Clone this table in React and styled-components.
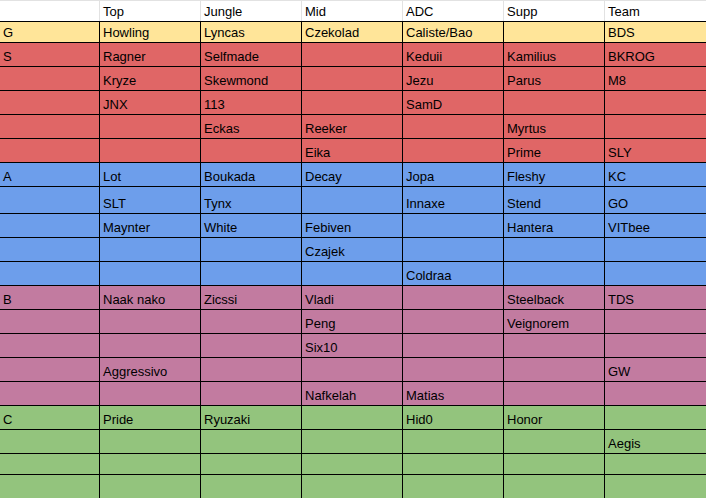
import React from "react";
import styled, { createGlobalStyle } from "styled-components";

const Global = createGlobalStyle`
  html, body { margin: 0; padding: 0; background: #ffffff; overflow: hidden; }
  body { font-family: "Liberation Sans", Arial, sans-serif; }
`;

const COLORS = {
  yellow: "#ffe599",
  red: "#e06666",
  blue: "#6d9eeb",
  pink: "#c27ba0",
  green: "#93c47d",
};

const Sheet = styled.div`
  width: 706px;
  display: flex;
  flex-direction: column;
`;

const Row = styled.div`
  display: grid;
  grid-template-columns: 99px 100px 100px 100px 100px 100px 101px;
  column-gap: 1px;
  background: ${(p) => (p.$header ? "#e2e2e2" : "#000000")};
  border-top: 1px solid ${(p) => (p.$header ? "#e2e2e2" : "#000000")};
  height: ${(p) => p.$h}px;
  box-sizing: content-box;
`;

const Cell = styled.div`
  background: ${(p) => p.$bg};
  display: flex;
  align-items: flex-end;
  padding: 0 3px 2px 3px;
  font-size: 13px;
  line-height: 15px;
  color: #000000;
  white-space: nowrap;
  overflow: hidden;
`;

const header = ["", "Top", "Jungle", "Mid", "ADC", "Supp", "Team"];

const rows = [
  { c: "yellow", h: 20, d: ["G", "Howling", "Lyncas", "Czekolad", "Caliste/Bao", "", "BDS"] },
  { c: "red", h: 23, d: ["S", "Ragner", "Selfmade", "", "Keduii", "Kamilius", "BKROG"] },
  { c: "red", h: 23, d: ["", "Kryze", "Skewmond", "", "Jezu", "Parus", "M8"] },
  { c: "red", h: 23, d: ["", "JNX", "113", "", "SamD", "", ""] },
  { c: "red", h: 23, d: ["", "", "Eckas", "Reeker", "", "Myrtus", ""] },
  { c: "red", h: 23, d: ["", "", "", "Eika", "", "Prime", "SLY"] },
  { c: "blue", h: 23, d: ["A", "Lot", "Boukada", "Decay", "Jopa", "Fleshy", "KC"] },
  { c: "blue", h: 26, d: ["", "SLT", "Tynx", "", "Innaxe", "Stend", "GO"] },
  { c: "blue", h: 23, d: ["", "Maynter", "White", "Febiven", "", "Hantera", "VITbee"] },
  { c: "blue", h: 23, d: ["", "", "", "Czajek", "", "", ""] },
  { c: "blue", h: 23, d: ["", "", "", "", "Coldraa", "", ""] },
  { c: "pink", h: 23, d: ["B", "Naak nako", "Zicssi", "Vladi", "", "Steelback", "TDS"] },
  { c: "pink", h: 23, d: ["", "", "", "Peng", "", "Veignorem", ""] },
  { c: "pink", h: 23, d: ["", "", "", "Six10", "", "", ""] },
  { c: "pink", h: 23, d: ["", "Aggressivo", "", "", "", "", "GW"] },
  { c: "pink", h: 23, d: ["", "", "", "Nafkelah", "Matias", "", ""] },
  { c: "green", h: 23, d: ["C", "Pride", "Ryuzaki", "", "Hid0", "Honor", ""] },
  { c: "green", h: 23, d: ["", "", "", "", "", "", "Aegis"] },
  { c: "green", h: 20, d: ["", "", "", "", "", "", ""] },
  { c: "green", h: 23, d: ["", "", "", "", "", "", ""] },
];

export default function App() {
  return (
    <>
      <Global />
      <Sheet>
        <Row $header $h={20}>
          {header.map((t, i) => (
            <Cell key={i} $bg="#ffffff">{t}</Cell>
          ))}
        </Row>
        {rows.map((r, ri) => (
          <Row key={ri} $h={r.h}>
            {r.d.map((t, i) => (
              <Cell key={i} $bg={COLORS[r.c]}>{t}</Cell>
            ))}
          </Row>
        ))}
      </Sheet>
    </>
  );
}
